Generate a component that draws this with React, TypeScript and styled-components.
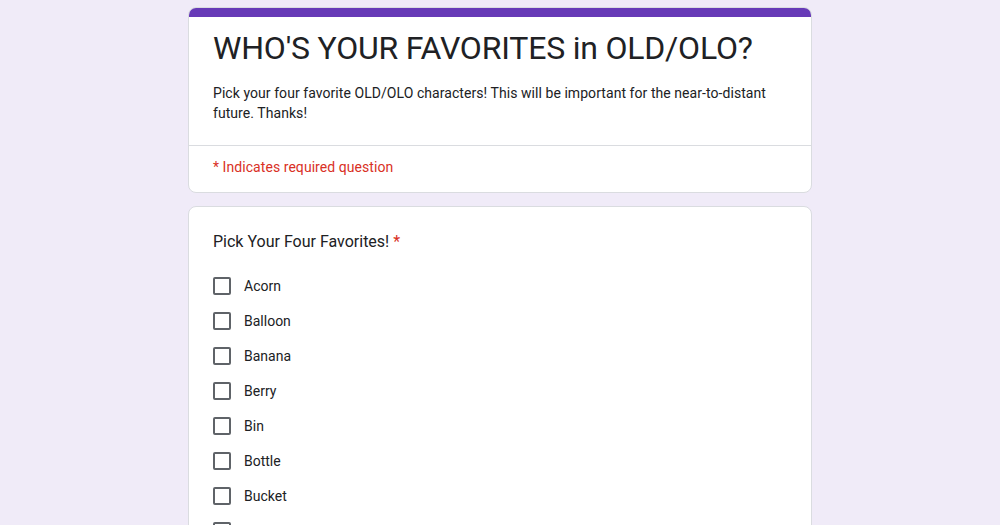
import styled, { createGlobalStyle } from 'styled-components'

const GlobalStyle = createGlobalStyle`
  html, body {
    margin: 0;
    padding: 0;
    background-color: #f0ebf8;
  }
  body {
    font-family: Roboto, "Liberation Sans", sans-serif;
    color: #202124;
  }
`

const Page = styled.div`
  display: flex;
  flex-direction: column;
  align-items: center;
  padding-top: 7px;
  gap: 13px;
  height: 525px;
  overflow: hidden;
  box-sizing: border-box;
`

const Card = styled.div`
  flex-shrink: 0;
  width: 624px;
  box-sizing: border-box;
  background-color: #ffffff;
  border: 1px solid #dadce0;
  border-radius: 8px;
  overflow: hidden;
`

const TopBar = styled.div`
  height: 10px;
  background-color: #673ab7;
  margin: -1px -1px 0;
`

const HeaderBody = styled.div`
  padding: 11px 24px 22px;
  border-bottom: 1px solid #dadce0;
`

const Title = styled.h1`
  margin: 0;
  font-family: Roboto, "Liberation Sans", sans-serif;
  font-size: 32px;
  line-height: 40px;
  font-weight: 400;
  letter-spacing: -0.2px;
  color: #202124;
`

const Description = styled.p`
  margin: 15px 0 0;
  font-size: 14px;
  line-height: 20px;
  letter-spacing: 0.06px;
  color: #202124;
`

const RequiredNote = styled.div`
  padding: 11px 24px 15px;
  font-size: 14px;
  line-height: 20px;
  letter-spacing: 0.06px;
  color: #d93025;
`

const QuestionBody = styled.div`
  padding: 23px 24px 24px;
`

const QuestionTitle = styled.div`
  font-size: 16px;
  line-height: 24px;
  color: #202124;
  margin-bottom: 14px;
`

const Star = styled.span`
  color: #d93025;
`

const OptionList = styled.div`
  display: flex;
  flex-direction: column;
`

const Option = styled.label`
  display: flex;
  align-items: center;
  gap: 13px;
  height: 35px;
  font-size: 14px;
  color: #202124;
`

const Box = styled.span`
  width: 18px;
  height: 18px;
  box-sizing: border-box;
  border: 2px solid #5f6368;
  border-radius: 2px;
  flex-shrink: 0;
`

const options = ['Acorn', 'Balloon', 'Banana', 'Berry', 'Bin', 'Bottle', 'Bucket', 'Cake', 'Clock']

const App = () => {
  return (
    <>
      <GlobalStyle />
      <Page>
        <Card>
          <TopBar />
          <HeaderBody>
            <Title>WHO'S YOUR FAVORITES in OLD/OLO?</Title>
            <Description>
              Pick your four favorite OLD/OLO characters! This will be important for the near-to-distant future. Thanks!
            </Description>
          </HeaderBody>
          <RequiredNote>* Indicates required question</RequiredNote>
        </Card>
        <Card>
          <QuestionBody>
            <QuestionTitle>
              Pick Your Four Favorites! <Star>*</Star>
            </QuestionTitle>
            <OptionList>
              {options.map((o) => (
                <Option key={o}>
                  <Box />
                  {o}
                </Option>
              ))}
            </OptionList>
          </QuestionBody>
        </Card>
      </Page>
    </>
  )
}

export default App
